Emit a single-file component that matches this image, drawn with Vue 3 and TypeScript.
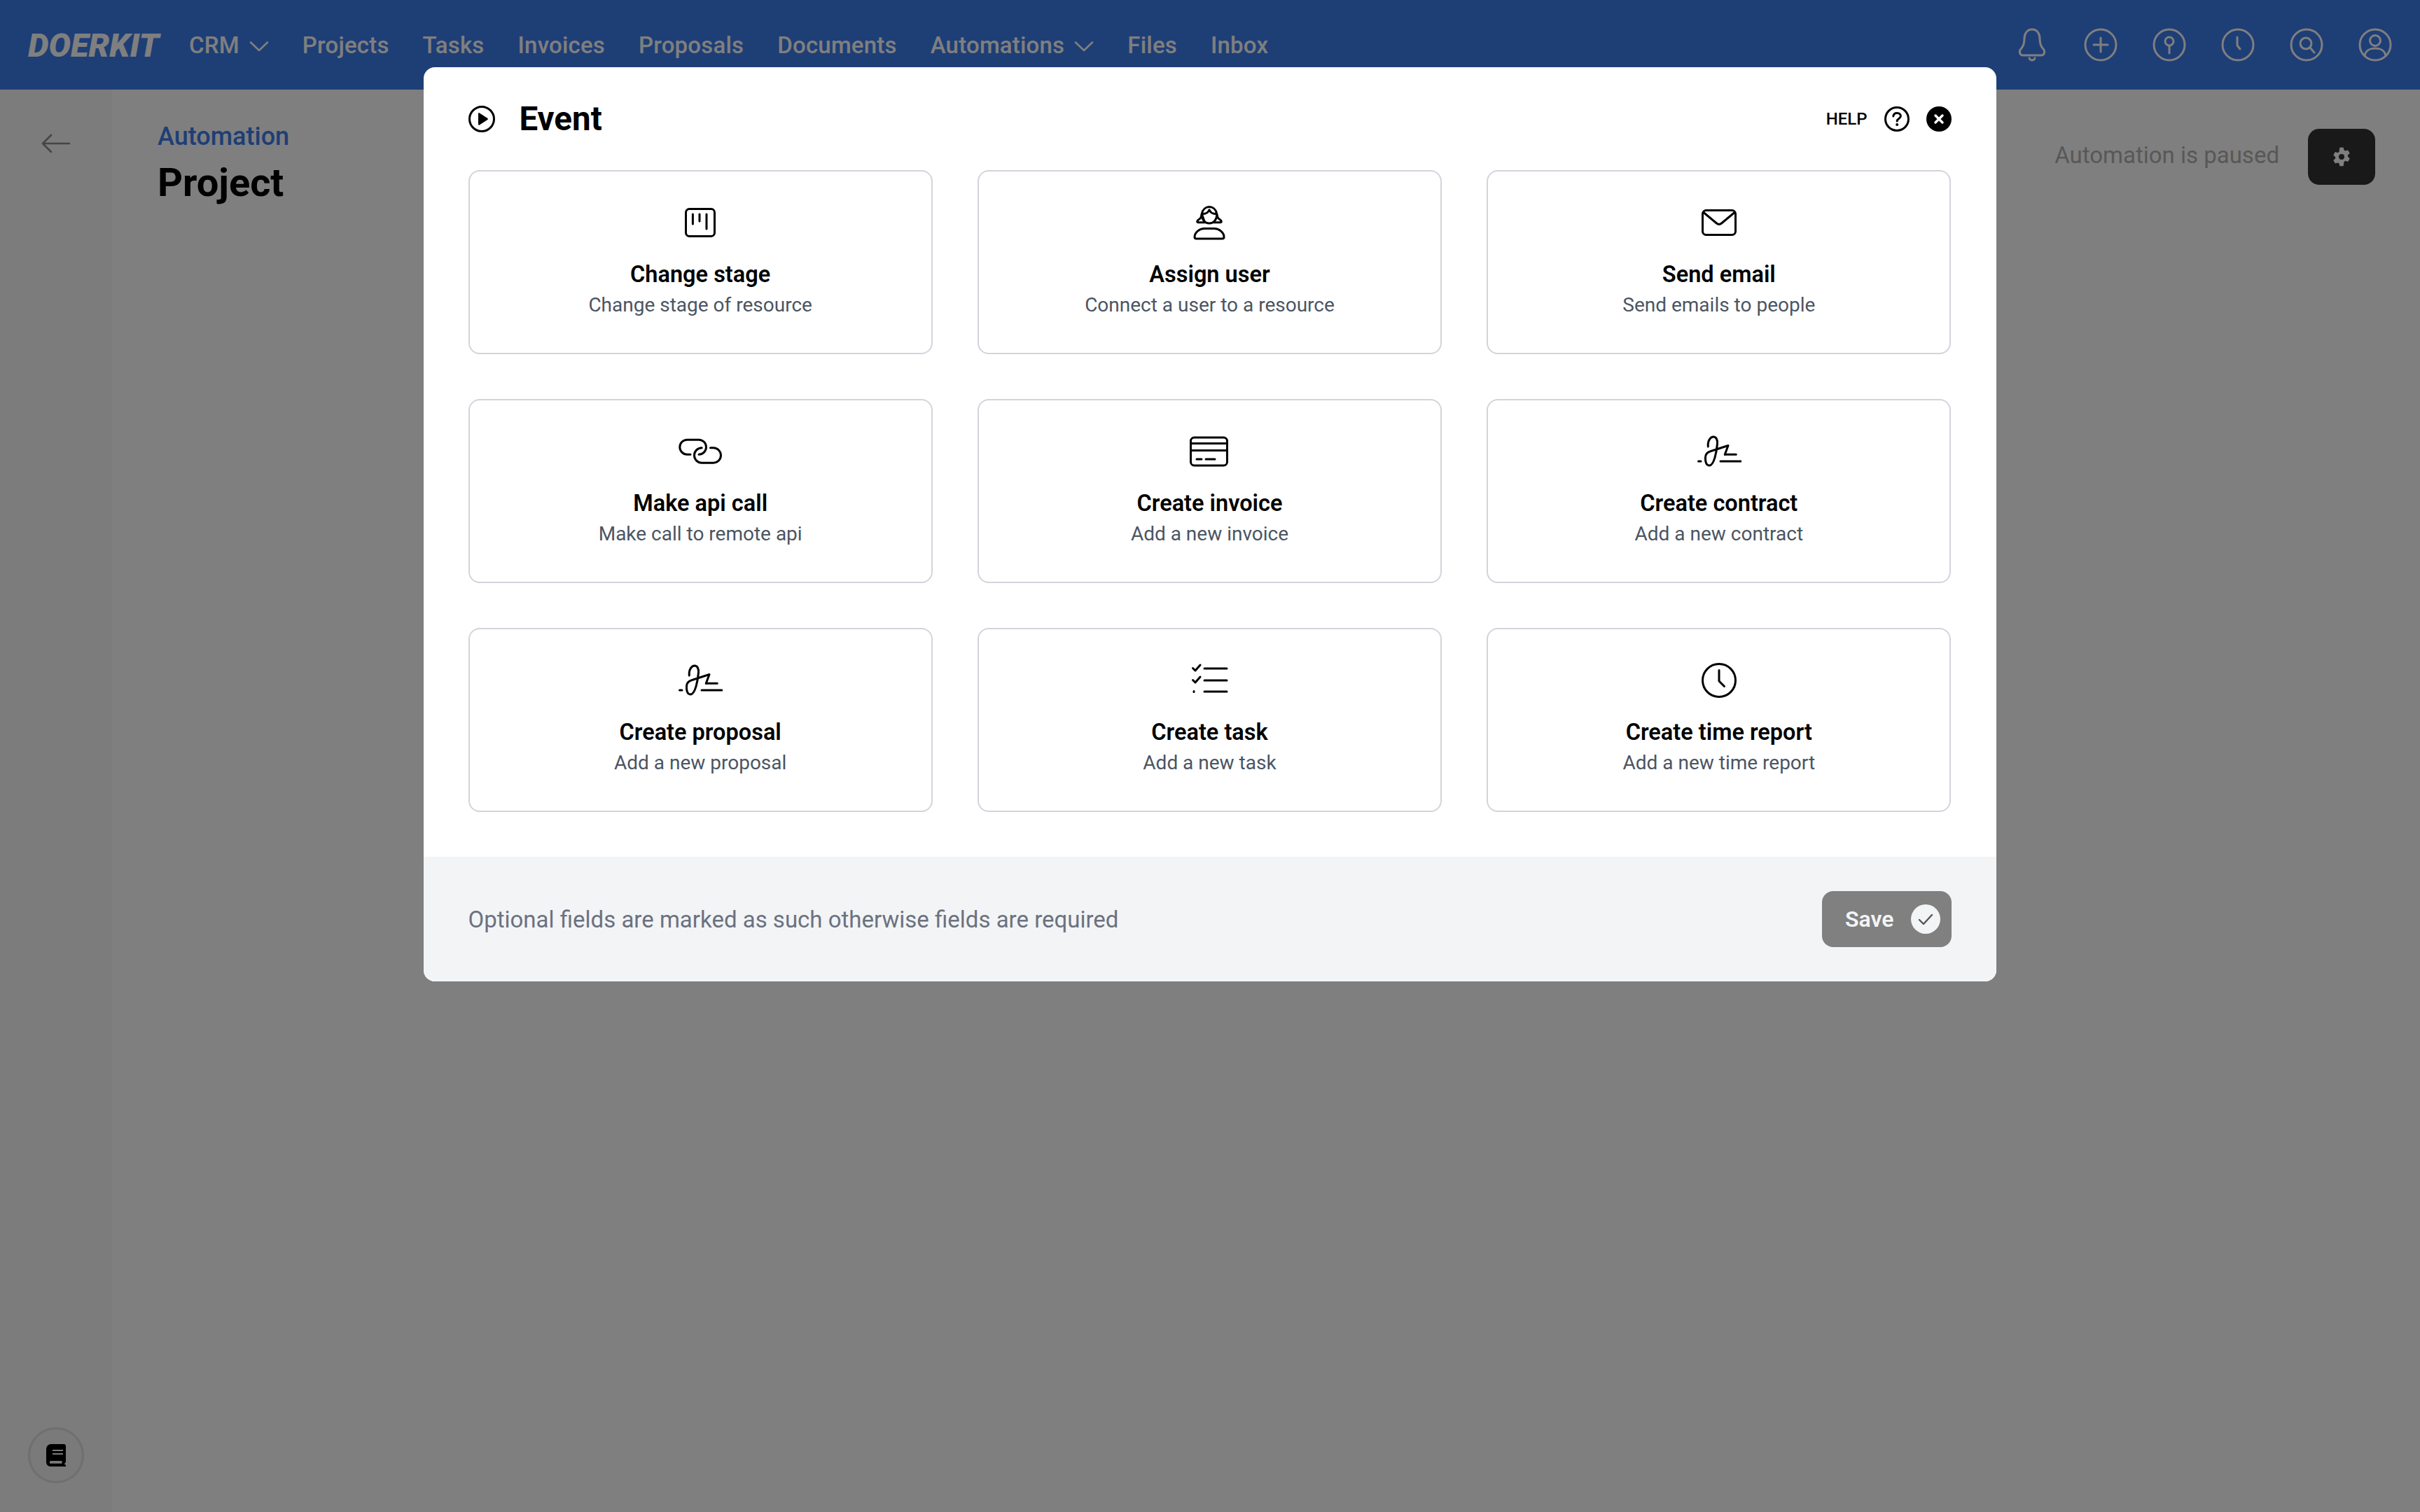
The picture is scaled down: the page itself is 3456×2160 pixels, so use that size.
<script setup lang="ts">
interface Action { title: string; sub: string; icon: string }
const nav: { label: string; chevron?: boolean }[] = [
  { label: 'CRM', chevron: true },
  { label: 'Projects' },
  { label: 'Tasks' },
  { label: 'Invoices' },
  { label: 'Proposals' },
  { label: 'Documents' },
  { label: 'Automations', chevron: true },
  { label: 'Files' },
  { label: 'Inbox' },
]
const actions: Action[] = [
  { title: 'Change stage', sub: 'Change stage of resource', icon: 'stage' },
  { title: 'Assign user', sub: 'Connect a user to a resource', icon: 'user' },
  { title: 'Send email', sub: 'Send emails to people', icon: 'mail' },
  { title: 'Make api call', sub: 'Make call to remote api', icon: 'link' },
  { title: 'Create invoice', sub: 'Add a new invoice', icon: 'card' },
  { title: 'Create contract', sub: 'Add a new contract', icon: 'sign' },
  { title: 'Create proposal', sub: 'Add a new proposal', icon: 'sign' },
  { title: 'Create task', sub: 'Add a new task', icon: 'list' },
  { title: 'Create time report', sub: 'Add a new time report', icon: 'clock' },
]
</script>

<template>
  <div class="page">
    <header class="topbar">
      <span class="logo">DOERKIT</span>
      <nav class="nav">
        <span v-for="n in nav" :key="n.label" class="nav-item">
          {{ n.label }}
          <svg v-if="n.chevron" class="chev" viewBox="0 0 28 16" fill="none" stroke="currentColor" stroke-width="2.6" stroke-linecap="round" stroke-linejoin="round"><path d="M2 2.5 14 14 26 2.5" /></svg>
        </span>
      </nav>
      <div class="top-icons">
        <svg class="top-icon" viewBox="0 0 48 48"><path d="M24 2c-7 0-11 6-11 13 0 6-1 11-5 15-3 3-2 9 3 9h26c5 0 6-6 3-9-4-4-5-9-5-15 0-7-4-13-11-13Z" /><path d="M20 43c1 4 7 4 8 0" /></svg>
        <svg class="top-icon" viewBox="0 0 48 48"><circle cx="24" cy="24" r="22" /><path d="M24 14v20M14 24h20" /></svg>
        <svg class="top-icon" viewBox="0 0 48 48"><circle cx="24" cy="24" r="22" /><circle cx="24" cy="19" r="6" /><path d="M24 25v11" /></svg>
        <svg class="top-icon" viewBox="0 0 48 48"><circle cx="24" cy="24" r="22" /><path d="M23 13v12l4 5" /></svg>
        <svg class="top-icon" viewBox="0 0 48 48"><circle cx="24" cy="24" r="22" /><circle cx="23" cy="22" r="8" /><path d="m29 28 6 7" /></svg>
        <svg class="top-icon" viewBox="0 0 48 48"><circle cx="24" cy="24" r="22" /><circle cx="24" cy="18" r="7.5" /><path d="M9 40c1-8 8-11 15-11s14 3 15 11" /></svg>
      </div>
    </header>

    <div class="body">
      <aside class="rail">
        <svg class="back" viewBox="0 0 42 28" fill="none" stroke="currentColor" stroke-width="2.6" stroke-linecap="round" stroke-linejoin="round"><path d="M40 14H2M14 2 2 14l12 12" /></svg>
        <button class="book-btn" type="button">
          <svg viewBox="0 0 28 32" width="28" height="32"><path fill="#000" fill-rule="evenodd" d="M7 0h18a3 3 0 0 1 3 3v22c0 1-.6 1.6-1.6 2v2.4H27.6a1.3 1.3 0 0 1 0 2.6H6a6 6 0 0 1-6-6V7a7 7 0 0 1 7-7Zm2 8v2h15V8H9Zm0 5v2h15v-2H9ZM5 25.600v2.200h17.500v-3.800H6.500A1.500 1.500 0 0 0 5 25.600Z" /></svg>
        </button>
      </aside>
      <main class="content">
        <div class="crumbs">
          <a class="crumb">Automation</a>
          <h1 class="project">Project</h1>
        </div>
        <div class="status">
          <span class="paused">Automation is paused</span>
          <button class="gear-btn" type="button">
            <svg viewBox="0 0 24 24" width="32" height="32"><path fill="#fff" fill-rule="evenodd" d="M10 2h4l.6 2.800 1.500.9 2.700-.9 2 3.400-2.100 1.900v1.800l2.100 1.900-2 3.400-2.700-.9-1.500.9L14 22h-4l-.6-2.800-1.500-.9-2.700.9-2-3.400 2.100-1.900v-1.800L3.200 10.100l2-3.400 2.700.9 1.500-.9L10 2Zm2 7a3 3 0 1 0 0 6 3 3 0 0 0 0-6Z" /></svg>
          </button>
        </div>
      </main>
    </div>

    <div class="overlay">
      <section class="modal">
        <div class="modal-main">
          <div class="modal-head">
            <div class="modal-title">
              <svg viewBox="0 0 38 38" width="38" height="38"><circle cx="19" cy="19" r="17.500" fill="none" stroke="#000" stroke-width="3" /><path d="M14 11.500c0-1 1-1.500 1.800-1l11.500 7.600c.8.500.8 1.500 0 2L15.800 27.500c-.8.500-1.800 0-1.800-1Z" fill="#000" /></svg>
              <h2>Event</h2>
            </div>
            <div class="modal-tools">
              <span class="help">HELP</span>
              <svg viewBox="0 0 36 36" width="36" height="36"><circle cx="18" cy="18" r="16.500" fill="none" stroke="#000" stroke-width="3" /><path d="M12.800 14c.4-3 2.600-4.600 5.400-4.600 3 0 5.200 1.800 5.200 4.300 0 3.900-5.200 3.700-5.200 7.300" fill="none" stroke="#000" stroke-width="3" stroke-linecap="round" /><circle cx="18.200" cy="26" r="2" /></svg>
              <svg viewBox="0 0 36 36" width="36" height="36"><circle cx="18" cy="18" r="18" /><path d="m13 13 10 10M23 13 13 23" stroke="#fff" stroke-width="3.400" stroke-linecap="round" /></svg>
            </div>
          </div>
          <div class="grid">
            <article v-for="a in actions" :key="a.title" class="card">
              <svg class="card-icon" viewBox="0 0 64 50">
                <g v-if="a.icon === 'stage'"><rect x="11.500" y="5.500" width="41" height="39" rx="5" /><path d="M21.400 13v14M31 13v10M41 13v21" /></g>
                <g v-else-if="a.icon === 'user'"><path d="M21.300 12.500c5 .5 9-1.500 10.700-5.700 1.700 4.200 5.700 6.200 10.700 5.700" /><path d="M21.300 12.500c-.5 8 4.500 13.500 10.700 13.500s11.200-5.500 10.700-13.500" /><path d="M21.300 12.500C22.500 6 27 2.500 32 2.500s9.500 3.500 10.700 10c.5 2.500.8 4.500 1.800 5.800 1 1.400 3.300 2.700 4.500 4.200.8 1.300 0 2.300-1.500 2.300h-9M25.500 24.800h-9c-1.500 0-2.300-1-1.500-2.300 1.200-1.500 3.500-2.800 4.500-4.200 1-1.300 1.300-3.300 1.800-5.800Z" /><path d="M13.500 48h37c1.700 0 2.500-.8 2.500-2.300 0-6.700-7-12.200-14-12.200H25c-7 0-14 5.500-14 12.200 0 1.500.8 2.300 2.500 2.300Z" /></g>
                <g v-else-if="a.icon === 'mail'"><rect x="8.500" y="7.500" width="47" height="35" rx="5" /><path d="M10.500 11 28.500 26c2.200 1.800 4.800 1.800 7 0L53.500 11" /></g>
                <g v-else-if="a.icon === 'link'"><path d="M18 29.200h-4.700a10.500 10.500 0 0 1 0-21H30a10.500 10.500 0 0 1 0 21" /><path d="M46.500 19.800h4.300a10.700 10.700 0 0 1 0 21.400H34.200a10.700 10.700 0 0 1 0-21.400" /></g>
                <g v-else-if="a.icon === 'card'"><rect x="5.500" y="5" width="52" height="40" rx="5" /><path d="M6 13.500h51M6 23.500h51M14 36h7M27 36h13" /></g>
                <g v-else-if="a.icon === 'sign'"><path d="M2.500 39h3.500M34 39h29M40.300 29.300h16" /><path d="M16.300 18C15.500 9 20 4 24 4c4 0 6 4.500 5.500 10-1 11-4.500 31-11.500 31-5 0-5.800-7-5.500-12 .5-8 9.500-9 15.500-11L45 16.500l-4.700 12.800" /></g>
                <g v-else-if="a.icon === 'list'"><path d="m8.500 7.500 3.500 3.500 7-8M8.500 24.500l3.500 3.500 7-8" /><path d="M25 8h32M25 25h32M25 41h32M10 40.500v1" /></g>
                <g v-else><circle cx="32" cy="25" r="23.500" /><path d="M32 10.500V26l7.500 7.500" /></g>
              </svg>
              <h3 class="card-title">{{ a.title }}</h3>
              <p class="card-sub">{{ a.sub }}</p>
            </article>
          </div>
        </div>
        <footer class="modal-foot">
          <span class="note">Optional fields are marked as such otherwise fields are required</span>
          <button class="save" type="button">
            Save
            <span class="save-dot"><svg viewBox="0 0 24 24" width="24" height="24" fill="none" stroke="#555" stroke-width="2.400" stroke-linecap="round" stroke-linejoin="round"><path d="m3 13 6 6L21 6" /></svg></span>
          </button>
        </footer>
      </section>
    </div>
  </div>
</template>

<style>
html, body { margin: 0; background: #fff; }
</style>

<style scoped>
.page {
  position: relative;
  width: 3456px;
  height: 2160px;
  overflow: hidden;
  display: flex;
  flex-direction: column;
  background: #ffffff;
  font-family: Roboto, "Noto Sans", Arial, sans-serif;
  color: #000;
}
.topbar {
  height: 128px;
  flex: none;
  background: #3d7cec;
  display: flex;
  align-items: center;
  padding: 0 40px;
  color: #fff;
}
.logo {
  font-family: Roboto, sans-serif;
  font-size: 47px;
  font-weight: 900;
  font-style: italic;
  width: 230px;
  color: #fff;
}
.nav { display: flex; gap: 48px; flex: 1; font-size: 33px; font-weight: 500; letter-spacing: 0.2px; }
.nav-item { display: flex; align-items: center; gap: 14px; }
.chev { width: 28px; height: 16px; margin-top: 4px; }
.top-icons { display: flex; gap: 50px; }
.top-icon { width: 48px; height: 48px; fill: none; stroke: currentColor; stroke-width: 3; stroke-linecap: round; stroke-linejoin: round; }

.body { flex: 1; display: flex; min-height: 0; }
.rail {
  width: 160px;
  flex: none;
  background: #f8f8f8;
  display: flex;
  flex-direction: column;
  align-items: center;
  justify-content: space-between;
  padding: 63px 0 41px;
  box-sizing: border-box;
}
.back { width: 42px; height: 28px; color: #8a8a8a; }
.book-btn {
  width: 80px; height: 80px; border-radius: 50%;
  border: 3px solid #dedede; background: #f5f5f5;
  display: flex; align-items: center; justify-content: center; padding: 0;
}
.content {
  flex: 1;
  display: flex;
  justify-content: space-between;
  padding: 43px 64px 0 65px;
}
.crumb { display: block; font-size: 36px; font-weight: 500; color: #3d7cec; line-height: 48px; }
.project { margin: 6px 0 0; font-size: 56px; font-weight: 700; line-height: 72px; }
.status { display: flex; align-items: center; gap: 41px; height: 80px; margin-top: 13px; }
.paused { font-size: 33px; color: #b0b0b0; margin-top: -6px; }
.gear-btn {
  width: 96px; height: 80px; border-radius: 16px; border: 0; background: #333;
  display: flex; align-items: center; justify-content: center; padding: 0;
}
.overlay {
  position: absolute;
  inset: 0;
  background: rgba(0, 0, 0, 0.5);
  display: flex;
  justify-content: center;
  align-items: flex-start;
  padding-top: 96px;
}
.modal {
  width: 2246px;
  border-radius: 16px;
  overflow: hidden;
  background: #fff;
  margin-left: -1px;
}
.modal-main { padding: 55px 64px 64px; }
.modal-head { display: flex; align-items: center; justify-content: space-between; height: 38px; margin-bottom: 54px; }
.modal-title { display: flex; align-items: center; gap: 35px; }
.modal-title h2 { margin: 0; font-size: 47.5px; font-weight: 700; }
.modal-tools { display: flex; align-items: center; gap: 24px; }
.help { font-size: 24px; font-weight: 500; }
.grid { display: grid; grid-template-columns: repeat(3, 1fr); gap: 64px; }
.card {
  height: 263px;
  box-sizing: border-box;
  border: 2px solid #d1d5db;
  border-radius: 16px;
  display: flex;
  flex-direction: column;
  align-items: center;
  padding-top: 48px;
}
.card-icon { width: 64px; height: 50px; flex: none; fill: none; stroke: #000; stroke-width: 3; stroke-linecap: round; stroke-linejoin: round; }
.card-title { margin: 27px 0 0; font-size: 32.5px; font-weight: 600; line-height: 44px; }
.card-sub { margin: 0; font-size: 28px; color: #4b5563; line-height: 44px; }
.modal-foot {
  height: 178px;
  background: #f3f4f6;
  display: flex;
  align-items: center;
  justify-content: space-between;
  padding: 0 64px;
}
.note { font-size: 33px; color: #6b7280; padding-top: 1px; }
.save {
  width: 185px; height: 80px; border-radius: 16px; border: 0; background: #808080;
  color: #f3f4f6; font: 600 32px Roboto, sans-serif;
  display: flex; align-items: center; justify-content: flex-end; gap: 24px; padding: 0 16px 0 0;
}
.save-dot {
  width: 42px; height: 42px; border-radius: 50%; background: #f3f4f6;
  display: flex; align-items: center; justify-content: center;
}
</style>
